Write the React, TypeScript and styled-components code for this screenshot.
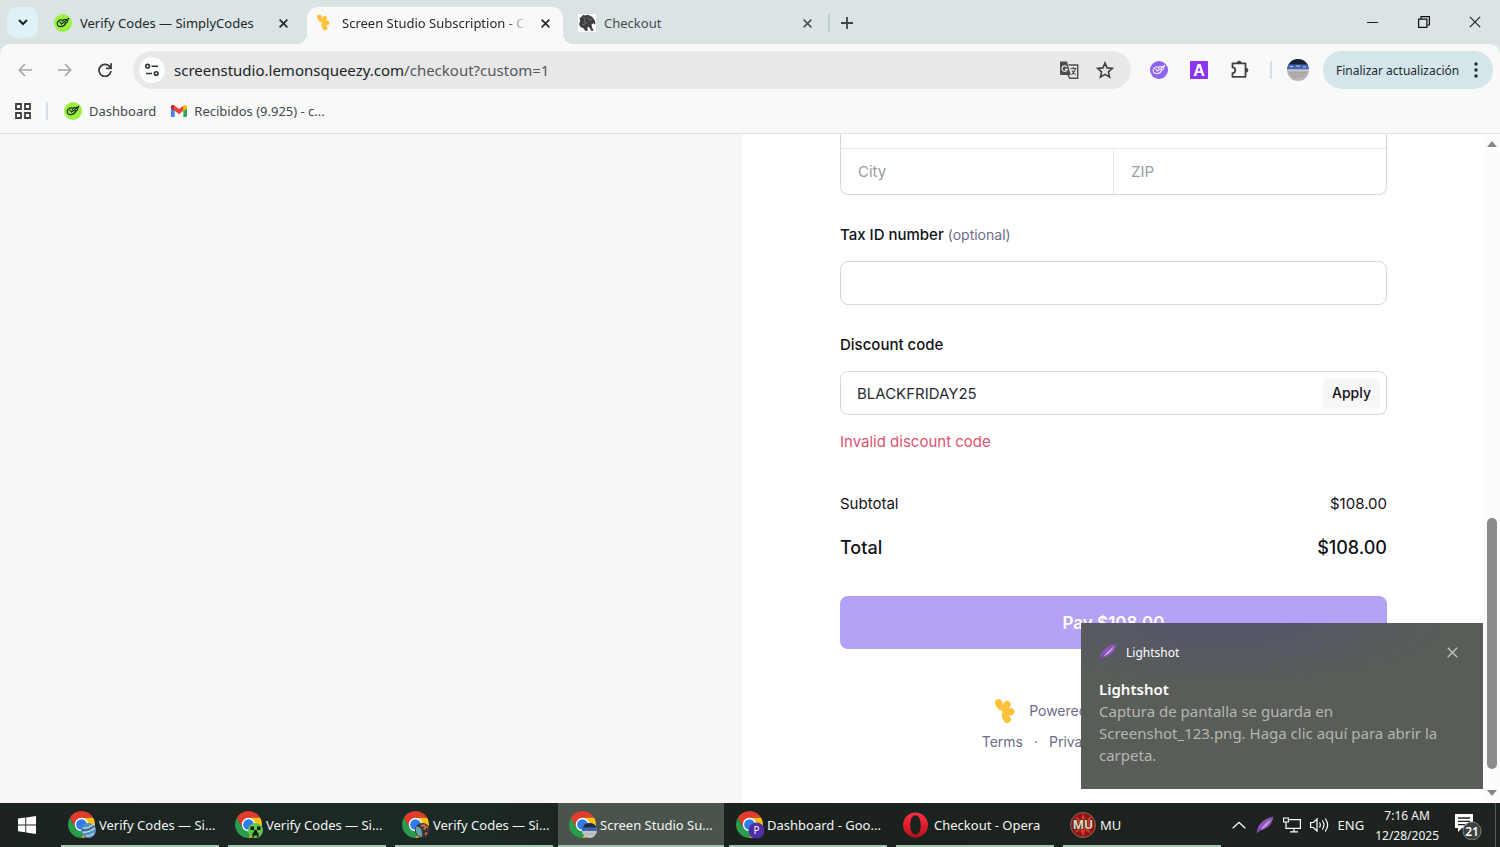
import React from "react";
import styled, { createGlobalStyle, css } from "styled-components";

const ui = `"Segoe UI", "Noto Sans", "Open Sans", sans-serif`;
const inter = `Inter, "Liberation Sans", sans-serif`;

const GlobalStyle = createGlobalStyle`
  *, *::before, *::after { box-sizing: border-box; }
  body { margin: 0; font-family: ${ui}; font-size: 12px; color: #1f2223; }
  button { border: 0; padding: 0; background: none; font: inherit; color: inherit; cursor: pointer; }
  a { color: inherit; text-decoration: none; }
  svg { display: block; flex: none; }
`;

const Desktop = styled.div`
  position: relative;
  display: flex;
  flex-direction: column;
  min-height: 100vh;
  background: #fff;
`;

/* ---------- Tab strip ---------- */

const Chrome = styled.header`
  background: #dbe4e5;
`;

const TabStrip = styled.div`
  display: flex;
  align-items: flex-start;
  height: 44px;
  padding-left: 7px;
`;

const TabSearch = styled.button`
  display: grid;
  place-items: center;
  width: 31px;
  height: 31px;
  margin: 7px 7px 0 0;
  border-radius: 10px;
  background: #dff2f7;
`;

const Tabs = styled.div`
  display: flex;
  gap: 6px;
  min-width: 0;
`;

const TabItem = styled.div<{ $active?: boolean; $muted?: boolean }>`
  position: relative;
  display: flex;
  align-items: center;
  flex: 0 1 256px;
  width: 256px;
  height: 37px;
  margin-top: 7px;
  padding: 0 10px 5px 9px;
  border-radius: 11px 11px 0 0;
  color: ${(p) => (p.$muted ? "#474c4d" : "#25282a")};
  ${(p) =>
    p.$active &&
    css`
      background: #f9f9fa;
      &::before,
      &::after {
        content: "";
        position: absolute;
        bottom: 0;
        width: 10px;
        height: 10px;
      }
      &::before {
        left: -10px;
        background: radial-gradient(circle at 0 0, transparent 10px, #f9f9fa 10px);
      }
      &::after {
        right: -10px;
        background: radial-gradient(circle at 100% 0, transparent 10px, #f9f9fa 10px);
      }
    `}
`;

const TabTitle = styled.span<{ $fade?: boolean }>`
  flex: 1;
  min-width: 0;
  margin: 0 10px 0 8px;
  overflow: hidden;
  white-space: nowrap;
  font-size: 13px;
  line-height: 20px;
  ${(p) => p.$fade && css`mask-image: linear-gradient(90deg, #000 88%, transparent);`}
`;

const StripDivider = styled.span`
  width: 2px;
  height: 18px;
  margin: 14px 9px 0 3px;
  background: #b9d0d2;
`;

const PlainButton = styled.button`
  display: grid;
  place-items: center;
  width: 16px;
  height: 16px;
  flex: none;
`;

const NewTab = styled(PlainButton)`
  margin-top: 15px;
`;

const WindowControls = styled.div`
  display: flex;
  margin-left: auto;
`;

const WindowButton = styled.button`
  display: grid;
  place-items: center;
  width: 51px;
  height: 44px;
`;

/* ---------- Toolbar ---------- */

const Toolbar = styled.div`
  display: flex;
  align-items: center;
  height: 52px;
  padding: 0 7px 0 16px;
  border-radius: 10px 10px 0 0;
  background: #f9f9fa;
`;

const NavButtons = styled.div`
  display: flex;
  gap: 22px;
  margin-right: 19px;
`;

const IconButton = styled.button`
  display: grid;
  place-items: center;
  width: 18px;
  height: 24px;
  flex: none;
`;

const Omnibox = styled.div`
  display: flex;
  align-items: center;
  flex: 1;
  min-width: 0;
  height: 38px;
  gap: 9px;
  padding: 0 17px 0 6px;
  border-radius: 19px;
  background: #e8e8e8;
`;

const SiteInfo = styled.button`
  display: grid;
  place-items: center;
  width: 26px;
  height: 26px;
  flex: none;
  border-radius: 50%;
  background: #fbfcfc;
`;

const Url = styled.a`
  flex: 1;
  min-width: 0;
  overflow: hidden;
  white-space: nowrap;
  font-size: 15px;
  line-height: 22px;
  color: #202426;
  span { color: #54585b; }
`;

const OmniActions = styled.div`
  display: flex;
  gap: 18px;
`;

const Extensions = styled.div`
  display: flex;
  align-items: center;
  gap: 22px;
  margin-left: 19px;
`;

const ToolDivider = styled.span`
  width: 2px;
  height: 18px;
  background: #cfe4e7;
`;

const Profile = styled.button`
  display: block;
  margin: 0 14px 0 15px;
`;

const UpdateButton = styled.button`
  display: flex;
  align-items: center;
  justify-content: space-between;
  width: 170px;
  height: 38px;
  padding: 0 15px 0 13px;
  border-radius: 19px;
  background: #d4e6ea;
  color: #1c2b2e;
  white-space: nowrap;
`;

const Bookmarks = styled.nav`
  display: flex;
  align-items: center;
  height: 38px;
  padding: 0 15px 8px;
  border-bottom: 1px solid #dedfdf;
  background: #f9f9fa;
  color: #44484b;
`;

const BookmarkDivider = styled(ToolDivider)`
  margin: 0 16px 0 15px;
`;

const Bookmark = styled.a`
  display: flex;
  align-items: center;
  gap: 7px;
  margin-right: 15px;
  font-size: 13px;
  line-height: 20px;
`;

/* ---------- Checkout page ---------- */

const Viewport = styled.main`
  display: grid;
  grid-template-columns: minmax(0, 1fr) minmax(0, 1fr) 16px;
  flex: 1;
  font-family: ${inter};
  font-size: 15px;
  line-height: 24px;
  color: #121217;
`;

const SummaryPane = styled.section`
  background: #f6f6f6;
`;

const FormPane = styled.form`
  display: flex;
  flex-direction: column;
  padding: 0 97px 36px 98px;
`;

const outline = css`
  border: 1px solid #d8d8dc;
  border-radius: 8px;
  background: #fff;
`;

const AddressGroup = styled.div`
  ${outline}
  border-top: 0;
  border-radius: 0 0 8px 8px;
  padding-top: 14px;
`;

const AddressRow = styled.div`
  display: flex;
  border-top: 1px solid #e6e6e9;
`;

const AddressInput = styled.input`
  flex: 1;
  min-width: 0;
  height: 45px;
  padding: 0 17px;
  border: 0;
  outline: 0;
  background: none;
  font: inherit;
  & + & { border-left: 1px solid #e6e6e9; }
  &::placeholder { color: #9b9ba5; }
`;

const FieldLabel = styled.label`
  margin: 28px 0 14px;
  font-weight: 500;
  span { font-weight: 400; color: #6c6c89; font-size: 14px; }
`;

const FieldBox = styled.div`
  ${outline}
  display: flex;
  align-items: center;
  height: 44px;
  padding-right: 6px;
`;

const FieldInput = styled.input`
  flex: 1;
  min-width: 0;
  height: 40px;
  padding: 0 16px;
  border: 0;
  outline: 0;
  background: none;
  font: inherit;
  color: #2c2c35;
`;

const ApplyButton = styled.button`
  height: 31px;
  width: 57px;
  border-radius: 4px;
  background: #f7f7f8;
  font-size: 14px;
  font-weight: 500;
`;

const ErrorText = styled.p`
  margin: 15px 0 38px;
  color: #e0526f;
`;

const AmountRow = styled.div<{ $total?: boolean }>`
  display: flex;
  justify-content: space-between;
  ${(p) =>
    p.$total &&
    css`
      margin: 20px 0 36px;
      font-size: 18px;
      font-weight: 500;
    `}
`;

const PayButton = styled.button`
  height: 53px;
  border-radius: 8px;
  background: #b5a1f5;
  color: #fff;
  font-size: 17px;
  font-weight: 600;
`;

const PageFooter = styled.footer`
  display: flex;
  flex-direction: column;
  align-items: center;
  gap: 7px;
  margin-top: 50px;
  padding-right: 14px;
  font-size: 14px;
  color: #6c6c89;
`;

const Powered = styled.a`
  display: flex;
  align-items: center;
  gap: 14px;
  height: 24px;
`;

const Legal = styled.div`
  display: flex;
  gap: 11px;
`;

const ScrollBar = styled.div`
  display: flex;
  flex-direction: column;
  align-items: center;
  background: #fcfcfc;
`;

const ScrollArrow = styled.button`
  display: grid;
  place-items: center;
  height: 20px;
  width: 16px;
`;

const ScrollTrack = styled.div`
  display: flex;
  flex-direction: column;
  justify-content: flex-end;
  flex: 1;
  padding-bottom: 14px;
`;

const ScrollThumb = styled.div`
  width: 10px;
  height: 251px;
  border-radius: 5px;
  background: #8b8b8b;
`;

/* ---------- Notification ---------- */

const Toast = styled.aside`
  position: absolute;
  right: 17px;
  bottom: 58px;
  width: 402px;
  height: 166px;
  padding: 18px;
  background:
    radial-gradient(ellipse 230px 62px at 35% 0, #555668 20%, transparent),
    #595d58;
  color: #fff;
`;

const ToastHeader = styled.div`
  display: flex;
  align-items: center;
  gap: 9px;
  height: 22px;
  button { margin: 0 5px 0 auto; }
`;

const ToastTitle = styled.h2`
  margin: 15px 0 0;
  font-size: 15px;
  font-weight: 600;
  line-height: 22px;
`;

const ToastBody = styled.p`
  margin: 0;
  font-size: 15px;
  line-height: 22px;
  color: #b4b6b3;
`;

/* ---------- Taskbar ---------- */

const Taskbar = styled.footer`
  display: flex;
  height: 44px;
  background: linear-gradient(90deg, #1c2320, #1c2a25 26%, #1b211c 52%, #1d241f);
  color: #f3f5f4;
`;

const StartButton = styled.button`
  display: grid;
  place-items: center;
  flex: none;
  width: 57px;
  padding-right: 3px;
`;

const TaskList = styled.div`
  display: flex;
  gap: 1px;
  min-width: 0;
`;

const Task = styled.button<{ $active?: boolean }>`
  position: relative;
  display: flex;
  align-items: center;
  flex: 0 1 166px;
  width: 166px;
  min-width: 0;
  padding: 0 11px;
  gap: 2px;
  font-size: 13px;
  white-space: nowrap;
  background: ${(p) => (p.$active ? "#4a544d" : "transparent")};
  &::after {
    content: "";
    position: absolute;
    bottom: 0;
    left: ${(p) => (p.$active ? 0 : 4)}px;
    right: ${(p) => (p.$active ? 0 : 4)}px;
    height: 2px;
    background: #a4c3b0;
  }
`;

const Tray = styled.div`
  display: flex;
  align-items: center;
  flex: none;
  margin-left: auto;
  gap: 9px;
  font-size: 13px;
`;

const Clock = styled.time`
  margin-left: 2px;
  padding-top: 1px;
  text-align: center;
  font-size: 12px;
  line-height: 20px;
`;

const ActionCenter = styled.button`
  display: block;
  margin: 2px 0 0 6px;
`;

const ShowDesktop = styled.button`
  width: 5px;
  height: 44px;
  margin-left: 3px;
  border-left: 1px solid #555c57;
`;

/* ---------- Drawings ---------- */

const Cross = ({ size = 9, color = "#262a2b", weight = 1.9 }) => (
  <svg width={size} height={size} viewBox="0 0 10 10" stroke={color} strokeWidth={weight} fill="none">
    <path d="M.7.7 9.3 9.3M9.3.7.7 9.3" />
  </svg>
);

const SimplyIcon = ({ bg = "#9cf03f", ink = "#173016" }) => (
  <svg width="18" height="18" viewBox="0 0 18 18" fill="none" stroke={ink} strokeLinecap="round" strokeLinejoin="round">
    <circle cx="9" cy="9" r="9" fill={bg} stroke="none" />
    <path d="M8.200 6C5.200 5.600 3.100 7.600 3.200 9.800c.1 2 1.800 3 3.900 2.800 2.400-.3 4.200-1.800 4.800-3.600" strokeWidth="1.200" />
    <path d="M5.800 8.300c.8.300 1.300 1 1.500 1.900L14.900 4.300" strokeWidth="1.200" />
    <path d="M8.300 7.300 10 5.300l1.400.5 2.800-.9-1 3.400-2.300 1" strokeWidth="1.100" />
  </svg>
);

const petal = "M.6 0C3-2.600 6.500-3.700 9.200-3.700a3.700 3.700 0 0 1 0 7.400C6.500 3.700 3 2.600.6 0Z";

const LemonIcon = ({ width = 14, height = 18 }) => (
  <svg width={width} height={height} viewBox="0 0 20 26" fill="#fdc13a">
    <g transform="translate(6.500 14)">
      <path d={petal} transform="rotate(-107) translate(.5 0)" />
      <path d={petal} transform="rotate(-54)" />
      <path d={petal} transform="rotate(-2)" />
      <path d={petal} transform="rotate(52)" />
    </g>
  </svg>
);

const RhinoIcon = () => (
  <svg width="18" height="18" viewBox="0 0 18 18">
    <path fill="#fff" d="M0 0h18v18H0z" />
    <path fill="#3d3e40" d="m1.500 4.500 3-2.800.8-1 1.700.8L10 .800l4 2 2.800 3.500.7 3.200-1.800 1.200.4-1.700-2.600 1.500.5 2.500 1.500 3.800-2 .3-2.500-4-1.800.5.800 3-2.600.4-2.200-3-2.700-1L1 10l1.200-3Z" />
    <path stroke="#85878a" strokeWidth=".7" fill="none" d="m5 3 2.500 2L6 8l3 1.500M10 3l1 3 3-.5M4 11l3-1" />
  </svg>
);

const TranslateIcon = () => (
  <svg width="19" height="18" viewBox="0 0 19 18" fill="none">
    <path d="M8.500 4h9.200v13.200H9.800L7.500 13" stroke="#4b4f52" strokeWidth="1.400" />
    <path d="M0 .5h7L10.800 14H1.200Q0 14 0 12.800Z" fill="#4b4f52" />
    <path d="M7 6.200A2.700 2.700 0 1 0 7.300 8.400H5" stroke="#e8e8e8" strokeWidth="1.200" />
    <path d="M10.500 7.500h6M13.300 6v1.500M15.500 7.500c-.8 3-2.200 4.800-4 6.200M12 9.500c.8 1.900 2 3.200 4 4.400" stroke="#4b4f52" strokeWidth="1.100" />
  </svg>
);

const StarIcon = () => (
  <svg width="18" height="18" viewBox="0 0 18 18" fill="none" stroke="#3d4143" strokeWidth="1.600">
    <path d="m9 2 2.100 4.900 5.300.5-4 3.500 1.200 5.200L9 13.400l-4.600 2.700 1.200-5.200-4-3.500 5.300-.5Z" />
  </svg>
);

const PuzzleIcon = () => (
  <svg width="20" height="20" viewBox="0 0 20 20" fill="none">
    <path d="M2.500 3.300h13v13.500h-13v-3.700c1.700 0 2.800-1.100 2.800-2.800S4.200 7.400 2.500 7.400Z" stroke="#3f4345" strokeWidth="1.800" strokeLinejoin="round" />
    <path d="M7.300 3a1.900 1.900 0 0 1 3.800 0ZM16 8.300a1.900 1.900 0 0 1 0 3.800Z" fill="#3f4345" stroke="#3f4345" />
  </svg>
);

const AvatarPhoto = ({ size = 22 }) => (
  <svg width={size} height={size} viewBox="0 0 22 22">
    <defs><clipPath id="avatarClip"><circle cx="11" cy="11" r="11" /></clipPath></defs>
    <g clipPath="url(#avatarClip)">
      <path fill="#b8b2b4" d="M0 0h22v22H0z" />
      <path fill="#172238" d="M0 0h22v6H0z" />
      <path fill="#4267b4" d="M0 5.500h22v5H0z" />
      <path stroke="#dfe5f0" strokeWidth=".8" d="M3 7.500h3M9 7h4M16 8h3M0 11h22" />
      <path stroke="#9a979e" strokeWidth=".8" d="M2 14h17M4 17h13" />
    </g>
  </svg>
);

const GmailIcon = () => (
  <svg width="16" height="12" viewBox="0 0 16 12">
    <path fill="#4285f4" d="M0 2v9q0 1 1 1h2.700V4.800Z" />
    <path fill="#34a853" d="M16 2v9q0 1-1 1h-2.700V4.800Z" />
    <path fill="#fbbc04" d="M12.300.9v5L16 3.200V1.800C16 .1 14.200-.6 12.900.4Z" />
    <path fill="#c5221f" d="M3.700.9v5L0 3.200V1.800C0 .1 1.800-.6 3.100.4Z" />
    <path fill="#ea4335" d="M3.700.8 8 4.100 12.300.800v5L8 9.200 3.700 5.800Z" />
  </svg>
);

const Feather = ({ size = 18 }) => (
  <svg width={size} height={size} viewBox="0 0 18 18">
    <path fill="#8e55bd" d="M.8 17.500C1 9.500 6.500 3 17.300.5c-.8 6.700-4.500 12.300-12.500 13.800Z" />
    <path fill="#c9a0e6" d="M4.500 13.200C7 8 11 4.500 15.800 2.200 13.500 7 10 11.300 4.500 13.200Z" />
    <path stroke="#663894" strokeWidth=".9" fill="none" d="M1 17.300C5 11 9.500 6.500 16.500 1.500" />
  </svg>
);

type BadgeKind = "swirl" | "creeper" | "photo" | "flag" | "letter";

const badges: Record<BadgeKind, React.ReactNode> = {
  swirl: (
    <>
      <circle cx="20.500" cy="20.500" r="7.500" fill="#5590bd" />
      <path d="M15 18c4 1 7-1 11-4M15 22c4 1 8-1 12-4M18 26c4 0 6-1 8-3" stroke="#b4d4e8" strokeWidth="1.300" fill="none" />
      <path d="M14 20c5 1 8-1 12-4" stroke="#274b70" fill="none" />
    </>
  ),
  creeper: (
    <>
      <circle cx="20.500" cy="20.500" r="7.500" fill="#63c653" />
      <path d="M15.500 16.500h3.500v3.500h-3.500zM22 16.500h3.500V20H22zM19 20h3v2.500h1.500V27H22v-1.500h-3V27h-1.500v-4.500H19z" fill="#10240d" />
    </>
  ),
  photo: (
    <>
      <circle cx="20.500" cy="20.500" r="7.500" fill="#3d3038" />
      <path d="M14 17c4-1 7 3 6 10-4 0-7-4-6-10" fill="#5aa6a8" />
      <path d="m18 15 4-1 4 3-1 4-4-2ZM23 22l3 1-3 3Z" fill="#b1704e" />
      <path d="m20 17 2 1M24 18l1 4" stroke="#201828" />
    </>
  ),
  flag: (
    <>
      <circle cx="20.500" cy="20.500" r="7.500" fill="#c3c5c9" />
      <path d="M13.300 18.500a7.500 7.500 0 0 1 14.400 0Z" fill="#1c2b45" />
      <path d="M13.100 17.500h14.800v3.500H13z" fill="#3f68b0" />
      <path d="M15 24h11" stroke="#a5a7ab" />
    </>
  ),
  letter: (
    <>
      <circle cx="20.500" cy="20.500" r="8" fill="#512da8" />
      <text x="20.500" y="24" textAnchor="middle" fontSize="10" fill="#fff">P</text>
    </>
  ),
};

const ChromeIcon = ({ badge }: { badge: BadgeKind }) => (
  <svg width="29" height="30" viewBox="0 0 29 30">
    <svg y="1" width="27" height="27" viewBox="0 0 48 48">
      <path fill="#e33b2e" d="M24 12h20.780A24 24 0 0 0 3.220 12l10.390 18Z" />
      <path fill="#2a9d4a" d="M13.610 30 3.220 12A24 24 0 0 0 24 48l10.390-18Z" />
      <path fill="#fbc116" d="M34.390 30 24 48a24 24 0 0 0 20.780-36H24Z" />
      <circle cx="24" cy="24" r="12" fill="#fff" />
      <circle cx="24" cy="24" r="9.500" fill="#2f7de9" />
    </svg>
    {badges[badge]}
  </svg>
);

const OperaIcon = () => (
  <svg width="29" height="28" viewBox="0 0 29 28">
    <defs>
      <linearGradient id="operaRed" x1="0" y1="0" x2="0" y2="1">
        <stop offset="0" stopColor="#ff3043" />
        <stop offset="1" stopColor="#b80f1c" />
      </linearGradient>
    </defs>
    <path fill="url(#operaRed)" fillRule="evenodd" d="M12.500 1.500a12.500 12.500 0 1 0 0 25 12.500 12.500 0 0 0 0-25Zm0 2.800c3.300 0 5.200 4.300 5.200 9.700s-1.900 9.700-5.200 9.700S7.300 19.400 7.300 14s1.900-9.700 5.200-9.700Z" />
  </svg>
);

const MuIcon = () => (
  <svg width="28" height="28" viewBox="0 0 28 28">
    <circle cx="13" cy="14" r="12.500" fill="#8f1513" stroke="#8b6862" />
    <path fill="#d93a25" d="m13 2 2.500 7L22 5l-3 7 6 3-6.500 1.500L21 23l-6-4-2 7-2.500-7L5 22l2.500-6L2 13l6-1.500L5 5l6 4Z" />
    <text x="13" y="18" textAnchor="middle" fontSize="12" fontWeight="700" fill="#e6d6bb" stroke="#4a2a24" strokeWidth="1.600" paintOrder="stroke">MU</text>
  </svg>
);

const tasks: { label: string; icon: React.ReactNode; active?: boolean }[] = [
  { label: "Verify Codes — Si...", icon: <ChromeIcon badge="swirl" /> },
  { label: "Verify Codes — Si...", icon: <ChromeIcon badge="creeper" /> },
  { label: "Verify Codes — Si...", icon: <ChromeIcon badge="photo" /> },
  { label: "Screen Studio Su...", icon: <ChromeIcon badge="flag" />, active: true },
  { label: "Dashboard - Goo...", icon: <ChromeIcon badge="letter" /> },
  { label: "Checkout - Opera", icon: <OperaIcon /> },
  { label: "MU", icon: <MuIcon /> },
];

const BrowserChrome = () => (
  <Chrome>
    <TabStrip>
      <TabSearch aria-label="Search tabs">
        <svg width="10" height="7" viewBox="0 0 10 7" fill="none" stroke="#1b2022" strokeWidth="2"><path d="m1 1 4 4 4-4" /></svg>
      </TabSearch>
      <Tabs>
        <TabItem>
          <SimplyIcon />
          <TabTitle>Verify Codes — SimplyCodes</TabTitle>
          <PlainButton aria-label="Close tab"><Cross /></PlainButton>
        </TabItem>
        <TabItem $active>
          <svg width="18" height="18" viewBox="0 0 18 18"><svg x="1" width="14" height="18"><LemonIcon width={13} height={17} /></svg></svg>
          <TabTitle $fade>Screen Studio Subscription - Checkout</TabTitle>
          <PlainButton aria-label="Close tab"><Cross /></PlainButton>
        </TabItem>
        <TabItem $muted>
          <RhinoIcon />
          <TabTitle>Checkout</TabTitle>
          <PlainButton aria-label="Close tab"><Cross color="#474c4d" weight={1.6} /></PlainButton>
        </TabItem>
      </Tabs>
      <StripDivider />
      <NewTab aria-label="New tab">
        <svg width="12" height="12" viewBox="0 0 12 12" stroke="#3d4345" strokeWidth="1.800"><path d="M6 0v12M0 6h12" /></svg>
      </NewTab>
      <WindowControls>
        <WindowButton aria-label="Minimize">
          <svg width="11" height="11" viewBox="0 0 11 11" stroke="#222"><path d="M0 5.500h11" /></svg>
        </WindowButton>
        <WindowButton aria-label="Restore">
          <svg width="12" height="12" viewBox="0 0 12 12" fill="none" stroke="#111" strokeWidth="1.200"><path d="M.6 3.100h8.300v8.300H.6ZM3 3V.6h8.400V9H9" /></svg>
        </WindowButton>
        <WindowButton aria-label="Close"><Cross size={12} color="#222" weight={1} /></WindowButton>
      </WindowControls>
    </TabStrip>

    <Toolbar>
      <NavButtons>
        <IconButton aria-label="Back">
          <svg width="14" height="14" viewBox="0 0 14 14" fill="none" stroke="#a3a6a7" strokeWidth="1.600"><path d="M14 7H1.500M7 1 1.200 7 7 13" /></svg>
        </IconButton>
        <IconButton aria-label="Forward">
          <svg width="14" height="14" viewBox="0 0 14 14" fill="none" stroke="#a3a6a7" strokeWidth="1.600"><path d="M0 7h12.500M7 1l5.800 6L7 13" /></svg>
        </IconButton>
        <IconButton aria-label="Reload">
          <svg width="14" height="14" viewBox="0 0 14 14" fill="none" stroke="#3a3e40" strokeWidth="1.800"><path d="M12.200 4.300A6 6 0 1 0 13 8" /><path d="M13 .3v5H8" /></svg>
        </IconButton>
      </NavButtons>
      <Omnibox>
        <SiteInfo aria-label="Site information">
          <svg width="14" height="14" viewBox="0 0 14 14" fill="none" stroke="#2f3335" strokeWidth="1.600"><circle cx="2.600" cy="3.200" r="1.800" /><path d="M6.500 3.200H13M1 10.500h6" /><circle cx="11.200" cy="10.500" r="1.800" /></svg>
        </SiteInfo>
        <Url href="#">screenstudio.lemonsqueezy.com<span>/checkout?custom=1</span></Url>
        <OmniActions>
          <IconButton aria-label="Translate"><TranslateIcon /></IconButton>
          <IconButton aria-label="Bookmark"><StarIcon /></IconButton>
        </OmniActions>
      </Omnibox>
      <Extensions>
        <IconButton aria-label="SimplyCodes"><SimplyIcon bg="#8f63f4" ink="#efe7ff" /></IconButton>
        <IconButton aria-label="Extension A">
          <svg width="18" height="18" viewBox="0 0 18 18"><rect width="18" height="18" rx="1" fill="#8b35ee" /><text x="9" y="15" textAnchor="middle" fontFamily="Liberation Sans" fontSize="16" fontWeight="700" fill="#fff">A</text></svg>
        </IconButton>
        <IconButton aria-label="Extensions"><PuzzleIcon /></IconButton>
        <ToolDivider />
      </Extensions>
      <Profile aria-label="Profile"><AvatarPhoto /></Profile>
      <UpdateButton>
        Finalizar actualización
        <svg width="4" height="16" viewBox="0 0 4 16" fill="#1c2b2e"><circle cx="2" cy="2" r="1.700" /><circle cx="2" cy="8" r="1.700" /><circle cx="2" cy="14" r="1.700" /></svg>
      </UpdateButton>
    </Toolbar>

    <Bookmarks>
      <PlainButton aria-label="Apps">
        <svg width="16" height="16" viewBox="0 0 16 16" fill="none" stroke="#3c4042" strokeWidth="1.800"><path d="M1 1h5v5H1zM10 1h5v5h-5zM1 10h5v5H1zM10 10h5v5h-5z" /></svg>
      </PlainButton>
      <BookmarkDivider />
      <Bookmark href="#"><SimplyIcon />Dashboard</Bookmark>
      <Bookmark href="#"><GmailIcon />Recibidos (9.925) - c...</Bookmark>
    </Bookmarks>
  </Chrome>
);

const Checkout = () => (
  <Viewport>
    <SummaryPane />
    <FormPane onSubmit={(e) => e.preventDefault()}>
      <AddressGroup>
        <AddressRow>
          <AddressInput aria-label="City" placeholder="City" />
          <AddressInput aria-label="ZIP" placeholder="ZIP" />
        </AddressRow>
      </AddressGroup>
      <FieldLabel htmlFor="tax">Tax ID number <span>(optional)</span></FieldLabel>
      <FieldBox><FieldInput id="tax" /></FieldBox>
      <FieldLabel htmlFor="discount">Discount code</FieldLabel>
      <FieldBox>
        <FieldInput id="discount" defaultValue="BLACKFRIDAY25" />
        <ApplyButton type="button">Apply</ApplyButton>
      </FieldBox>
      <ErrorText>Invalid discount code</ErrorText>
      <AmountRow><span>Subtotal</span><span>$108.00</span></AmountRow>
      <AmountRow $total><span>Total</span><span>$108.00</span></AmountRow>
      <PayButton>Pay $108.00</PayButton>
      <PageFooter>
        <Powered href="#"><LemonIcon width={20} height={26} />Powered by Lemon Squeezy</Powered>
        <Legal>
          <a href="#">Terms</a><span>·</span><a href="#">Privacy</a><span>·</span><a href="#">Contact support</a>
        </Legal>
      </PageFooter>
    </FormPane>
    <ScrollBar>
      <ScrollArrow aria-label="Scroll up"><svg width="10" height="6" viewBox="0 0 10 6" fill="#858585"><path d="m5 0 5 6H0Z" /></svg></ScrollArrow>
      <ScrollTrack><ScrollThumb /></ScrollTrack>
      <ScrollArrow aria-label="Scroll down"><svg width="10" height="6" viewBox="0 0 10 6" fill="#858585"><path d="m5 6 5-6H0Z" /></svg></ScrollArrow>
    </ScrollBar>
  </Viewport>
);

export default function App() {
  return (
    <Desktop>
      <GlobalStyle />
      <BrowserChrome />
      <Checkout />
      <Taskbar>
        <StartButton aria-label="Start">
          <svg width="18" height="18" viewBox="0 0 18 18" fill="#fff"><path d="M0 2.600 7.300 1.600v6.900H0ZM8.200 1.400 18 0v8.500H8.200ZM0 9.400h7.300v6.900L0 15.300ZM8.200 9.400H18V18l-9.800-1.400Z" /></svg>
        </StartButton>
        <TaskList>
          {tasks.map((t, i) => (
            <Task key={i} $active={t.active}>{t.icon}{t.label}</Task>
          ))}
        </TaskList>
        <Tray>
          <PlainButton aria-label="Show hidden icons"><svg width="14" height="8" viewBox="0 0 14 8" fill="none" stroke="#fff" strokeWidth="1.300"><path d="m.7 7.300 6.300-6 6.300 6" /></svg></PlainButton>
          <Feather />
          <svg width="18" height="16" viewBox="0 0 18 16" fill="none" stroke="#fff" strokeWidth="1.200"><path d="M6 2.600h11.400v8.800H4M7 14.800h8M11 11.500v3.300M.6 1h4.800v4H.6ZM3 5v6.400h2" /></svg>
          <svg width="19" height="16" viewBox="0 0 19 16" fill="none" stroke="#fff" strokeWidth="1.200"><path d="M.6 5.500h2.800L7 2v12l-3.600-3.500H.6ZM9.500 5.500c1 1.500 1 3.500 0 5M12.300 3.500c2 2.700 2 6.300 0 9M15.200 1.500c3 4 3 9 0 13" /></svg>
          <span>ENG</span>
          <Clock>7:16 AM<br />12/28/2025</Clock>
          <ActionCenter aria-label="Notifications">
            <svg width="29" height="28" viewBox="0 0 29 28">
              <path fill="#fff" d="M1 2h18v14H8l-4 4v-4H1Z" />
              <path stroke="#1d241f" strokeWidth="1.300" d="M4 6h12M4 9.300h12M4 12.600h7" />
              <circle cx="18" cy="19" r="9" fill="#3b423d" stroke="#7c837e" />
              <text x="18" y="23.500" textAnchor="middle" fontSize="12" fontWeight="600" fill="#fff">21</text>
            </svg>
          </ActionCenter>
          <ShowDesktop aria-label="Show desktop" />
        </Tray>
      </Taskbar>
      <Toast role="status">
        <ToastHeader>
          <Feather />
          <span>Lightshot</span>
          <PlainButton aria-label="Dismiss"><Cross size={11} color="#c3c5c2" weight={1.200} /></PlainButton>
        </ToastHeader>
        <ToastTitle>Lightshot</ToastTitle>
        <ToastBody>Captura de pantalla se guarda en Screenshot_123.png. Haga clic aquí para abrir la carpeta.</ToastBody>
      </Toast>
    </Desktop>
  );
}
